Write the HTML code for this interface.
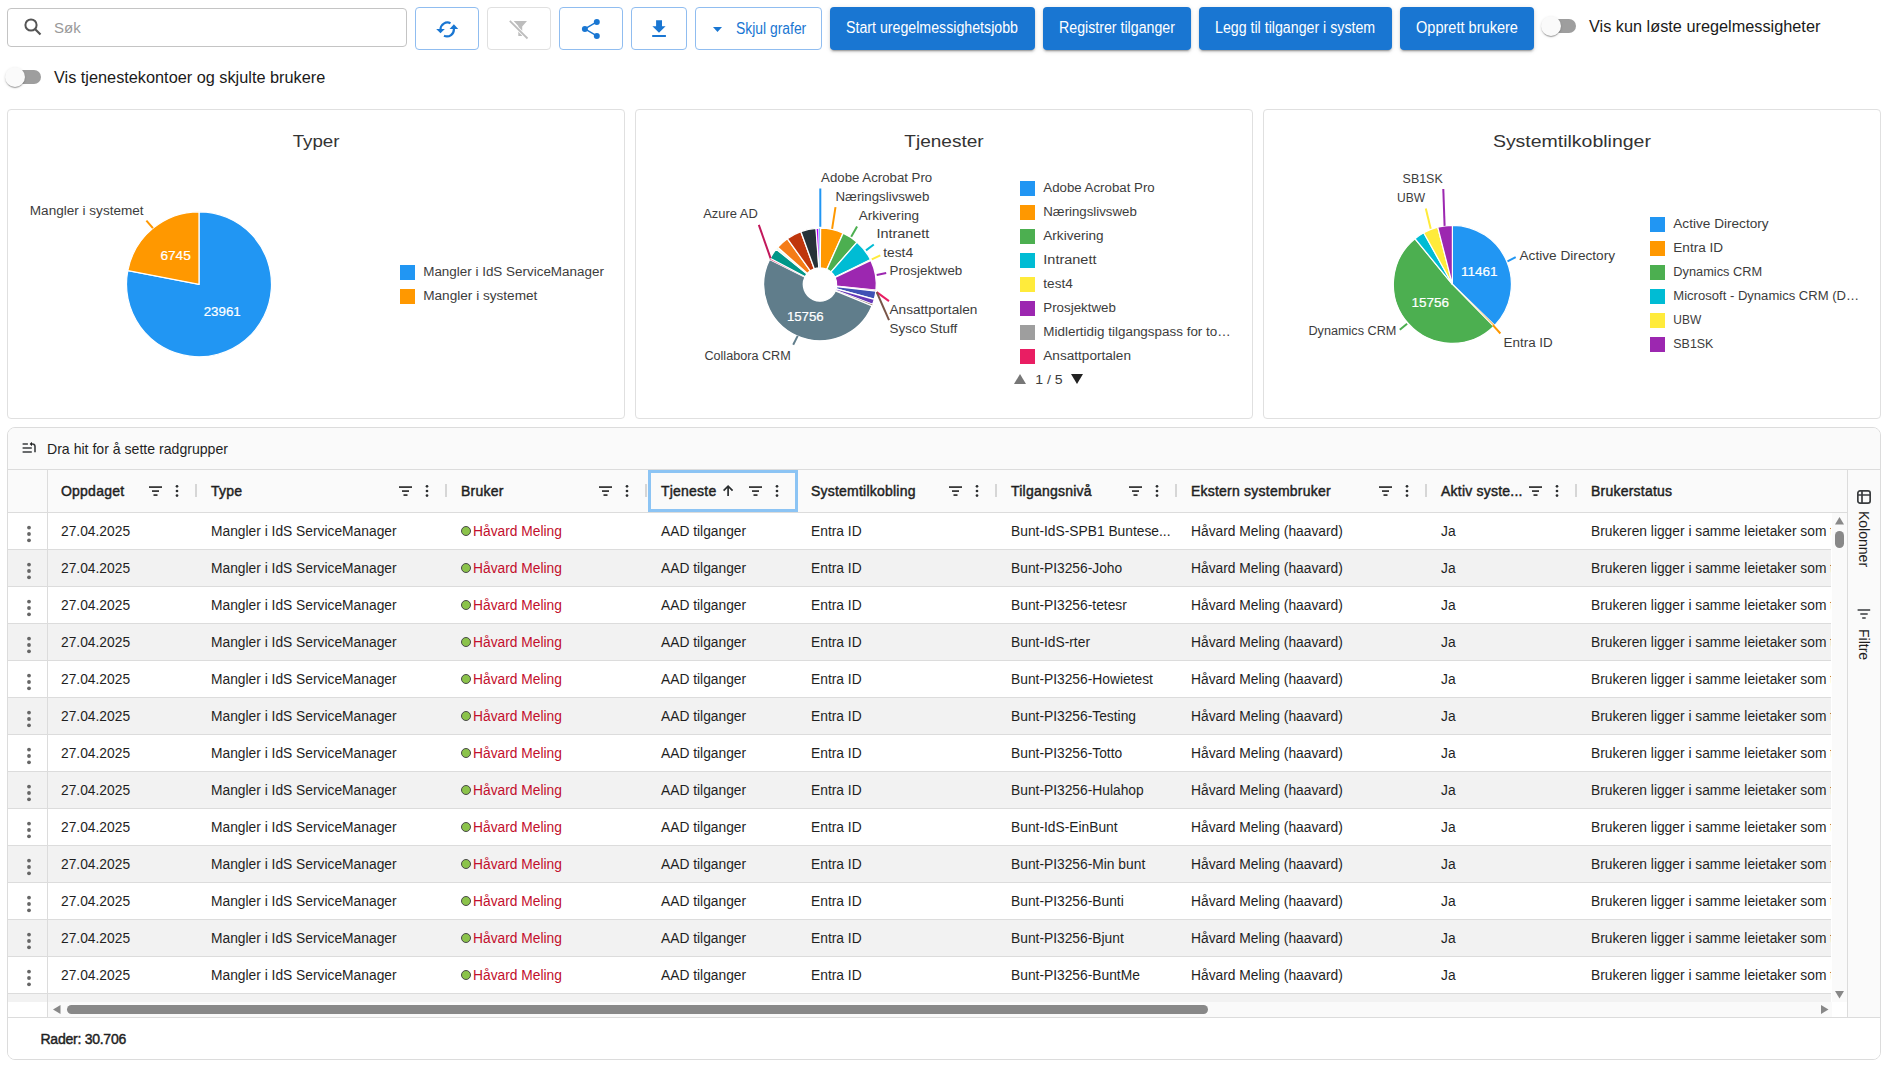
<!DOCTYPE html>
<html><head><meta charset="utf-8"><title>Uregelmessigheter</title>
<style>
*{box-sizing:border-box;margin:0;padding:0}
html,body{width:1888px;height:1068px;overflow:hidden;background:#fff;font-family:"Liberation Sans", sans-serif;color:#1f1f1f}
.abs{position:absolute}
.search{position:absolute;left:7px;top:8px;width:400px;height:39px;border:1px solid #c4c4c4;border-radius:4px}
.search .ph{position:absolute;left:46px;top:10px;font-size:15px;color:#999}
.ibtn{position:absolute;top:7px;height:43px;border:1px solid #90bdf0;border-radius:4px;background:#fff}
.ibtn.dis{border-color:#e0e0e0}
.obtn{position:absolute;top:7px;height:43px;border:1px solid #90bdf0;border-radius:4px;background:#fff;color:#1976d2;font-size:14.3px}
.cbtn{position:absolute;top:7px;height:43px;border-radius:4px;background:#1976d2;color:#fff;font-size:14.3px;
  box-shadow:0 3px 1px -2px rgba(0,0,0,.2),0 2px 2px 0 rgba(0,0,0,.14),0 1px 5px 0 rgba(0,0,0,.12);white-space:nowrap}
.cbtn span,.obtn span{position:absolute;top:12px;font-size:16px;transform-origin:0 0;white-space:nowrap}
.tog{position:absolute}
.tog .track{position:absolute;width:26px;height:14px;border-radius:7px;background:#9e9e9e}
.tog .thumb{position:absolute;width:20px;height:20px;border-radius:50%;background:#fafafa;
  box-shadow:0 2px 1px -1px rgba(0,0,0,.2),0 1px 1px 0 rgba(0,0,0,.14),0 1px 3px 0 rgba(0,0,0,.12)}
.lbl{position:absolute;font-size:16.3px;color:#1a1a1a;white-space:nowrap}
.card{position:absolute;top:109px;width:618px;height:310px;border:1px solid #e0e0e0;border-radius:4px;background:#fff}
.charts{position:absolute;left:0;top:0}
.grid{position:absolute;left:7px;top:427px;width:1874px;height:633px;border:1px solid #dcdcdc;border-radius:8px;background:#fff;overflow:hidden}
.gi{position:absolute;left:-8px;top:-428px;width:1888px;height:1068px}
.gpanel{position:absolute;left:8px;top:428px;width:1872px;height:42px;background:#fafafa;border-bottom:1px solid #dcdcdc}
.gpanel .t{position:absolute;left:39px;top:13px;font-size:14.1px;color:#1f1f1f}
.header{position:absolute;left:0;top:0;width:1847px;height:513px}
.hbg{position:absolute;left:8px;top:470px;width:1839px;height:43px;background:#fafafa;border-bottom:1px solid #dcdcdc}
.htxt{position:absolute;top:483px;font-size:14px;font-weight:normal;-webkit-text-stroke:0.45px #1f1f1f;letter-spacing:0.22px;color:#1f1f1f;white-space:nowrap}
.hfilt{position:absolute;top:486px;line-height:0}
.hdots{position:absolute;top:484px;line-height:0}
.hsep{position:absolute;top:484px;width:2px;height:13px;background:#d6d6d6}
.sortarrow{position:absolute}
.focus{position:absolute;left:648px;top:470px;width:150px;height:42px;border:3px solid #8cc4f4}
.pinline{position:absolute;left:47px;top:470px;width:1px;height:548px;background:#dcdcdc;z-index:2}
.rows{position:absolute;left:0;top:513px;width:1831px;height:489px;overflow:hidden}
.row{position:absolute;left:8px;width:1824px;height:37px;border-bottom:1px solid #dcdcdc}
.rdots{position:absolute;left:18px;top:12px;line-height:0}
.c{position:absolute;top:11px;font-size:13.8px;color:#1f1f1f;white-space:nowrap}
.red{color:#c20f2c}
.gdot{display:inline-block;width:10px;height:10px;border-radius:50%;background:#8bc34a;border:1px solid #4a4a4a;margin-right:2px;vertical-align:-0px}
.vscroll{position:absolute;left:1832px;top:513px;width:15px;height:489px;background:#fafafa}
.hscroll{position:absolute;left:8px;top:1002px;width:1824px;height:15px;background:#fafafa}
.sidebar{position:absolute;left:1847px;top:470px;width:34px;height:548px;background:#fafafa;border-left:1px solid #dcdcdc}
.footer{position:absolute;left:8px;top:1017px;width:1872px;height:42px;border-top:1px solid #dcdcdc;background:#fff}
.footer .t{position:absolute;left:32.5px;top:12.5px;font-size:14px;letter-spacing:-0.25px;-webkit-text-stroke:0.45px #1f1f1f;color:#1f1f1f;white-space:nowrap}
.vtext{position:absolute;font-size:14px;color:#1f1f1f;transform:rotate(90deg);transform-origin:0 0;white-space:nowrap}
</style></head><body>
<div class="search">
 <svg class="abs" style="left:16px;top:9px" width="18" height="18" viewBox="0 0 18 18"><circle cx="7" cy="7" r="5.6" stroke="#555" stroke-width="2" fill="none"/><path d="M11,11 L16.5,16.5" stroke="#555" stroke-width="2.2"/></svg>
 <div class="ph">Søk</div>
</div>
<div class="ibtn" style="left:415px;width:64px">
 <svg class="abs" style="left:20px;top:13px" width="23" height="17" viewBox="0 0 23 17">
  <path d="M14.5,2.2 A7,7 0 0 0 4.5,8.5" stroke="#1976d2" stroke-width="2.2" fill="none"/>
  <path d="M0.2,7.9 L8.8,7.9 L4.5,12.3 Z" fill="#1976d2"/>
  <path d="M8,14.8 A7,7 0 0 0 17.8,7.5" stroke="#1976d2" stroke-width="2.2" fill="none"/>
  <path d="M13.6,8 L22.2,8 L17.9,3.2 Z" fill="#1976d2"/>
 </svg>
</div>
<div class="ibtn dis" style="left:487px;width:64px">
 <svg class="abs" style="left:20px;top:11px" width="21" height="21" viewBox="0 0 21 21">
  <path d="M5.7,2 L19,2 L14.2,7.6 L14.2,17 L10.3,17 L10.3,7 Z" fill="#bdbdbd"/>
  <path d="M1.5,1.5 L19.5,19.5" stroke="#fff" stroke-width="3.5"/>
  <path d="M1.8,1.8 L19.5,19.5" stroke="#bdbdbd" stroke-width="1.8"/>
 </svg>
</div>
<div class="ibtn" style="left:559px;width:64px">
 <svg class="abs" style="left:20px;top:12px;overflow:visible" width="20" height="18" viewBox="0 0 20 18">
  <path d="M4.9,8.9 L16.8,1.9 M4.9,8.9 L16.8,15.9" stroke="#1976d2" stroke-width="1.5"/>
  <circle cx="16.8" cy="1.9" r="3" fill="#1976d2"/><circle cx="4.9" cy="8.9" r="3" fill="#1976d2"/><circle cx="16.8" cy="15.9" r="3" fill="#1976d2"/>
 </svg>
</div>
<div class="ibtn" style="left:631px;width:56px">
 <svg class="abs" style="left:19px;top:12px" width="15" height="19" viewBox="0 0 15 19">
  <path d="M5.1,0.3 L11,0.3 L11,6.3 L14.6,6.3 L8,12.7 L1.4,6.3 L5.1,6.3 Z" fill="#1976d2"/>
  <rect x="1.2" y="15" width="13.7" height="2" fill="#1976d2"/>
 </svg>
</div>
<div class="obtn" style="left:695px;width:127px">
 <svg class="abs" style="left:17px;top:19px" width="9" height="5" viewBox="0 0 9 5"><path d="M0,0 L9,0 L4.5,5 Z" fill="#1976d2"/></svg>
 <span style="left:40px;transform:scaleX(0.868)">Skjul grafer</span>
</div>
<div class="cbtn" style="left:830px;width:205px"><span style="left:16px;transform:scaleX(0.887)">Start uregelmessighetsjobb</span></div>
<div class="cbtn" style="left:1043px;width:148px"><span style="left:16px;transform:scaleX(0.887)">Registrer tilganger</span></div>
<div class="cbtn" style="left:1199px;width:193px"><span style="left:16px;transform:scaleX(0.887)">Legg til tilganger i system</span></div>
<div class="cbtn" style="left:1400px;width:134px"><span style="left:16px;transform:scaleX(0.91)">Opprett brukere</span></div>
<div class="tog" style="left:1541px;top:16px"><div class="track" style="left:9px;top:3px"></div><div class="thumb" style="left:0;top:0"></div></div>
<div class="lbl" style="left:1589px;top:17px">Vis kun løste uregelmessigheter</div>
<div class="tog" style="left:5px;top:67px"><div class="track" style="left:10px;top:3px"></div><div class="thumb" style="left:0;top:0"></div></div>
<div class="lbl" style="left:54px;top:68px">Vis tjenestekontoer og skjulte brukere</div>

<div class="card" style="left:7px"></div>
<div class="card" style="left:635px"></div>
<div class="card" style="left:1263px"></div>
<svg class="charts" width="1888" height="430" viewBox="0 0 1888 430" font-family='"Liberation Sans", sans-serif'><text x="292.7" y="146.9" font-size="17" fill="#333" text-anchor="start" textLength="46.8" lengthAdjust="spacingAndGlyphs" >Typer</text>
<path d="M199.00,284.30 L199.00,211.80 A72.5,72.5 0 1 1 127.81,270.59 Z" fill="#2196f3" stroke="#fff" stroke-width="1.2"/>
<path d="M199.00,284.30 L127.81,270.59 A72.5,72.5 0 0 1 199.00,211.80 Z" fill="#ff9800" stroke="#fff" stroke-width="1.2"/>
<text x="160.4" y="260.0" font-size="12.5" fill="#fff" text-anchor="start" textLength="30.4" lengthAdjust="spacingAndGlyphs" stroke="#fff" stroke-width="0.2">6745</text>
<text x="203.7" y="315.9" font-size="12.5" fill="#fff" text-anchor="start" textLength="37.0" lengthAdjust="spacingAndGlyphs" stroke="#fff" stroke-width="0.2">23961</text>
<line x1="146.4" y1="220.6" x2="152.9" y2="228.1" stroke="#ff9800" stroke-width="2"/>
<text x="29.8" y="214.8" font-size="12.5" fill="#3c3c3c" text-anchor="start" textLength="113.8" lengthAdjust="spacingAndGlyphs" >Mangler i systemet</text>
<rect x="400" y="265" width="15" height="15" fill="#2196f3"/>
<rect x="400" y="289" width="15" height="15" fill="#ff9800"/>
<text x="423.2" y="275.8" font-size="12.5" fill="#3c3c3c" text-anchor="start" textLength="180.7" lengthAdjust="spacingAndGlyphs" >Mangler i IdS ServiceManager</text>
<text x="423.2" y="299.8" font-size="12.5" fill="#3c3c3c" text-anchor="start" textLength="114.2" lengthAdjust="spacingAndGlyphs" >Mangler i systemet</text>
<text x="904.3" y="147.4" font-size="17" fill="#333" text-anchor="start" textLength="79.4" lengthAdjust="spacingAndGlyphs" >Tjenester</text>
<path d="M820.00,228.20 A56.3,56.3 0 0 1 820.59,228.20 L820.17,267.80 A16.7,16.7 0 0 0 820.00,267.80 Z" fill="#2196f3" stroke="#fff" stroke-width="0.5"/>
<path d="M820.59,228.20 A56.3,56.3 0 0 1 843.08,233.15 L826.85,269.27 A16.7,16.7 0 0 0 820.17,267.80 Z" fill="#ff9800" stroke="#fff" stroke-width="1.3"/>
<path d="M843.08,233.15 A56.3,56.3 0 0 1 857.08,242.14 L831.00,271.93 A16.7,16.7 0 0 0 826.85,269.27 Z" fill="#4caf50" stroke="#fff" stroke-width="1.3"/>
<path d="M857.08,242.14 A56.3,56.3 0 0 1 870.52,259.64 L834.98,277.13 A16.7,16.7 0 0 0 831.00,271.93 Z" fill="#00bcd4" stroke="#fff" stroke-width="1.3"/>
<path d="M870.52,259.64 A56.3,56.3 0 0 1 870.86,260.35 L835.09,277.34 A16.7,16.7 0 0 0 834.98,277.13 Z" fill="#ffeb3b" stroke="#fff" stroke-width="0.5"/>
<path d="M870.86,260.35 A56.3,56.3 0 0 1 876.01,290.19 L836.61,286.19 A16.7,16.7 0 0 0 835.09,277.34 Z" fill="#9c27b0" stroke="#fff" stroke-width="1.3"/>
<path d="M876.01,290.19 A56.3,56.3 0 0 1 875.90,291.17 L836.58,286.48 A16.7,16.7 0 0 0 836.61,286.19 Z" fill="#e91e63" stroke="#fff" stroke-width="0.5"/>
<path d="M875.90,291.17 A56.3,56.3 0 0 1 874.33,299.26 L836.12,288.88 A16.7,16.7 0 0 0 836.58,286.48 Z" fill="#3f51b5" stroke="#fff" stroke-width="1.3"/>
<path d="M874.33,299.26 A56.3,56.3 0 0 1 872.67,304.40 L835.62,290.40 A16.7,16.7 0 0 0 836.12,288.88 Z" fill="#673ab7" stroke="#fff" stroke-width="1.3"/>
<path d="M872.67,304.40 A56.3,56.3 0 0 1 872.09,305.86 L835.45,290.84 A16.7,16.7 0 0 0 835.62,290.40 Z" fill="#795548" stroke="#fff" stroke-width="0.5"/>
<path d="M872.09,305.86 A56.3,56.3 0 1 1 769.57,259.47 L805.04,277.07 A16.7,16.7 0 1 0 835.45,290.84 Z" fill="#607d8b" stroke="#fff" stroke-width="1.3"/>
<path d="M769.57,259.47 A56.3,56.3 0 0 1 770.20,258.24 L805.23,276.71 A16.7,16.7 0 0 0 805.04,277.07 Z" fill="#e91e63" stroke="#fff" stroke-width="0.5"/>
<path d="M770.20,258.24 A56.3,56.3 0 0 1 776.18,249.15 L807.00,274.01 A16.7,16.7 0 0 0 805.23,276.71 Z" fill="#009688" stroke="#fff" stroke-width="1.3"/>
<path d="M776.18,249.15 A56.3,56.3 0 0 1 777.70,247.34 L807.45,273.48 A16.7,16.7 0 0 0 807.00,274.01 Z" fill="#f1f8e9" stroke="#fff" stroke-width="0.5"/>
<path d="M777.70,247.34 A56.3,56.3 0 0 1 787.31,238.67 L810.30,270.90 A16.7,16.7 0 0 0 807.45,273.48 Z" fill="#f57c17" stroke="#fff" stroke-width="1.3"/>
<path d="M787.31,238.67 A56.3,56.3 0 0 1 800.84,231.56 L814.32,268.80 A16.7,16.7 0 0 0 810.30,270.90 Z" fill="#bf360c" stroke="#fff" stroke-width="1.3"/>
<path d="M800.84,231.56 A56.3,56.3 0 0 1 816.37,228.32 L818.92,267.83 A16.7,16.7 0 0 0 814.32,268.80 Z" fill="#263238" stroke="#fff" stroke-width="1.3"/>
<path d="M815.97,228.34 A56.3,56.3 0 0 1 818.92,228.21 L819.68,267.80 A16.7,16.7 0 0 0 818.81,267.84 Z" fill="#aa00ff" stroke="#fff" stroke-width="1.3"/>
<path d="M818.92,228.21 A56.3,56.3 0 0 1 820.00,228.20 L820.00,267.80 A16.7,16.7 0 0 0 819.68,267.80 Z" fill="#2196f3" stroke="#fff" stroke-width="0.5"/>
<text x="786.9" y="320.6" font-size="12.5" fill="#fff" text-anchor="start" textLength="36.8" lengthAdjust="spacingAndGlyphs" stroke="#fff" stroke-width="0.2">15756</text>
<line x1="820.3" y1="188.5" x2="820.3" y2="226.8" stroke="#2196f3" stroke-width="2"/>
<line x1="835.5" y1="207.2" x2="832.1" y2="228.8" stroke="#ff9800" stroke-width="2"/>
<line x1="857.1" y1="226.4" x2="851.2" y2="236.7" stroke="#4caf50" stroke-width="2"/>
<line x1="873.8" y1="244.5" x2="866" y2="250.4" stroke="#00bcd4" stroke-width="2"/>
<line x1="880.3" y1="255.3" x2="871.8" y2="259.3" stroke="#ffeb3b" stroke-width="2"/>
<line x1="886.2" y1="273" x2="876.7" y2="275" stroke="#9c27b0" stroke-width="2"/>
<line x1="889" y1="301.1" x2="876.7" y2="292.1" stroke="#e91e63" stroke-width="2"/>
<line x1="889" y1="320.2" x2="876.7" y2="292.1" stroke="#795548" stroke-width="2"/>
<line x1="793.2" y1="344.8" x2="797.7" y2="335.9" stroke="#607d8b" stroke-width="2"/>
<line x1="758.8" y1="224.9" x2="770.6" y2="258.3" stroke="#c2185b" stroke-width="2"/>
<text x="821.1" y="181.6" font-size="12.5" fill="#3c3c3c" text-anchor="start" textLength="111.1" lengthAdjust="spacingAndGlyphs" >Adobe Acrobat Pro</text>
<text x="835.5" y="200.9" font-size="12.5" fill="#3c3c3c" text-anchor="start" textLength="93.9" lengthAdjust="spacingAndGlyphs" >Næringslivsweb</text>
<text x="858.7" y="219.6" font-size="12.5" fill="#3c3c3c" text-anchor="start" textLength="60.3" lengthAdjust="spacingAndGlyphs" >Arkivering</text>
<text x="876.4" y="237.6" font-size="12.5" fill="#3c3c3c" text-anchor="start" textLength="53.0" lengthAdjust="spacingAndGlyphs" >Intranett</text>
<text x="883.2" y="256.7" font-size="12.5" fill="#3c3c3c" text-anchor="start" textLength="29.9" lengthAdjust="spacingAndGlyphs" >test4</text>
<text x="889.5" y="275.0" font-size="12.5" fill="#3c3c3c" text-anchor="start" textLength="72.8" lengthAdjust="spacingAndGlyphs" >Prosjektweb</text>
<text x="889.5" y="314.3" font-size="12.5" fill="#3c3c3c" text-anchor="start" textLength="87.9" lengthAdjust="spacingAndGlyphs" >Ansattportalen</text>
<text x="889.5" y="333.4" font-size="12.5" fill="#3c3c3c" text-anchor="start" textLength="67.8" lengthAdjust="spacingAndGlyphs" >Sysco Stuff</text>
<text x="704.4" y="359.5" font-size="12.5" fill="#3c3c3c" text-anchor="start" textLength="86.3" lengthAdjust="spacingAndGlyphs" >Collabora CRM</text>
<text x="703.2" y="217.6" font-size="12.5" fill="#3c3c3c" text-anchor="start" textLength="54.6" lengthAdjust="spacingAndGlyphs" >Azure AD</text>
<rect x="1020" y="181" width="15" height="15" fill="#2196f3"/>
<text x="1043.3" y="191.5" font-size="12.5" fill="#3c3c3c" text-anchor="start" textLength="111.4" lengthAdjust="spacingAndGlyphs" >Adobe Acrobat Pro</text>
<rect x="1020" y="205" width="15" height="15" fill="#ff9800"/>
<text x="1043.3" y="215.5" font-size="12.5" fill="#3c3c3c" text-anchor="start" textLength="93.5" lengthAdjust="spacingAndGlyphs" >Næringslivsweb</text>
<rect x="1020" y="229" width="15" height="15" fill="#4caf50"/>
<text x="1043.3" y="239.5" font-size="12.5" fill="#3c3c3c" text-anchor="start" textLength="60.3" lengthAdjust="spacingAndGlyphs" >Arkivering</text>
<rect x="1020" y="253" width="15" height="15" fill="#00bcd4"/>
<text x="1043.3" y="263.5" font-size="12.5" fill="#3c3c3c" text-anchor="start" textLength="53.2" lengthAdjust="spacingAndGlyphs" >Intranett</text>
<rect x="1020" y="277" width="15" height="15" fill="#ffeb3b"/>
<text x="1043.3" y="287.5" font-size="12.5" fill="#3c3c3c" text-anchor="start" textLength="29.5" lengthAdjust="spacingAndGlyphs" >test4</text>
<rect x="1020" y="301" width="15" height="15" fill="#9c27b0"/>
<text x="1043.3" y="311.5" font-size="12.5" fill="#3c3c3c" text-anchor="start" textLength="72.6" lengthAdjust="spacingAndGlyphs" >Prosjektweb</text>
<rect x="1020" y="325" width="15" height="15" fill="#9e9e9e"/>
<text x="1043.3" y="335.5" font-size="12.5" fill="#3c3c3c" text-anchor="start" textLength="187.4" lengthAdjust="spacingAndGlyphs" >Midlertidig tilgangspass for to…</text>
<rect x="1020" y="349" width="15" height="15" fill="#e91e63"/>
<text x="1043.3" y="359.5" font-size="12.5" fill="#3c3c3c" text-anchor="start" textLength="87.7" lengthAdjust="spacingAndGlyphs" >Ansattportalen</text>
<path d="M1014,384 L1020,374 L1026,384 Z" fill="#777"/>
<text x="1035.2" y="383.5" font-size="12.5" fill="#3c3c3c" text-anchor="start" textLength="27.5" lengthAdjust="spacingAndGlyphs" >1 / 5</text>
<path d="M1071,374 L1083,374 L1077,384 Z" fill="#222"/>
<text x="1492.9" y="147.4" font-size="17" fill="#333" text-anchor="start" textLength="158.0" lengthAdjust="spacingAndGlyphs" >Systemtilkoblinger</text>
<path d="M1452.40,284.30 L1452.40,225.30 A59,59 0 0 1 1494.77,325.36 Z" fill="#2196f3" stroke="#fff" stroke-width="1.2"/>
<path d="M1452.40,284.30 L1494.77,325.36 A59,59 0 0 1 1493.61,326.53 Z" fill="#ff9800" stroke="#fff" stroke-width="0.5"/>
<path d="M1452.40,284.30 L1493.68,326.45 A59,59 0 1 1 1414.95,238.71 Z" fill="#4caf50" stroke="#fff" stroke-width="1.2"/>
<path d="M1452.40,284.30 L1414.95,238.71 A59,59 0 0 1 1423.71,232.75 Z" fill="#00bcd4" stroke="#fff" stroke-width="1.2"/>
<path d="M1452.40,284.30 L1423.71,232.75 A59,59 0 0 1 1437.73,227.15 Z" fill="#ffeb3b" stroke="#fff" stroke-width="1.2"/>
<path d="M1452.40,284.30 L1437.73,227.15 A59,59 0 0 1 1452.40,225.30 Z" fill="#9c27b0" stroke="#fff" stroke-width="1.2"/>
<text x="1461.0" y="275.5" font-size="12.5" fill="#fff" text-anchor="start" textLength="36.6" lengthAdjust="spacingAndGlyphs" stroke="#fff" stroke-width="0.2">11461</text>
<text x="1411.4" y="306.8" font-size="12.5" fill="#fff" text-anchor="start" textLength="37.5" lengthAdjust="spacingAndGlyphs" stroke="#fff" stroke-width="0.2">15756</text>
<line x1="1443.3" y1="189" x2="1444.6" y2="225.9" stroke="#9c27b0" stroke-width="2"/>
<line x1="1425.8" y1="208.4" x2="1430.7" y2="228.7" stroke="#ffeb3b" stroke-width="2"/>
<line x1="1515.7" y1="257.1" x2="1507.5" y2="261.4" stroke="#2196f3" stroke-width="2"/>
<line x1="1399.8" y1="329.8" x2="1407.1" y2="323.8" stroke="#4caf50" stroke-width="2"/>
<line x1="1500.4" y1="333.5" x2="1492.9" y2="325.1" stroke="#ff9800" stroke-width="2"/>
<text x="1402.6" y="182.8" font-size="12.5" fill="#3c3c3c" text-anchor="start" textLength="40.1" lengthAdjust="spacingAndGlyphs" >SB1SK</text>
<text x="1397.0" y="201.5" font-size="12.5" fill="#3c3c3c" text-anchor="start" textLength="28.1" lengthAdjust="spacingAndGlyphs" >UBW</text>
<text x="1519.5" y="259.6" font-size="12.5" fill="#3c3c3c" text-anchor="start" textLength="95.6" lengthAdjust="spacingAndGlyphs" >Active Directory</text>
<text x="1308.4" y="334.5" font-size="12.5" fill="#3c3c3c" text-anchor="start" textLength="88.0" lengthAdjust="spacingAndGlyphs" >Dynamics CRM</text>
<text x="1503.6" y="347.0" font-size="12.5" fill="#3c3c3c" text-anchor="start" textLength="49.2" lengthAdjust="spacingAndGlyphs" >Entra ID</text>
<rect x="1650" y="217" width="15" height="15" fill="#2196f3"/>
<text x="1673.3" y="227.8" font-size="12.5" fill="#3c3c3c" text-anchor="start" textLength="95.3" lengthAdjust="spacingAndGlyphs" >Active Directory</text>
<rect x="1650" y="241" width="15" height="15" fill="#ff9800"/>
<text x="1673.3" y="251.8" font-size="12.5" fill="#3c3c3c" text-anchor="start" textLength="49.9" lengthAdjust="spacingAndGlyphs" >Entra ID</text>
<rect x="1650" y="265" width="15" height="15" fill="#4caf50"/>
<text x="1673.3" y="275.8" font-size="12.5" fill="#3c3c3c" text-anchor="start" textLength="88.8" lengthAdjust="spacingAndGlyphs" >Dynamics CRM</text>
<rect x="1650" y="289" width="15" height="15" fill="#00bcd4"/>
<text x="1673.3" y="299.8" font-size="12.5" fill="#3c3c3c" text-anchor="start" textLength="185.8" lengthAdjust="spacingAndGlyphs" >Microsoft - Dynamics CRM (D…</text>
<rect x="1650" y="313" width="15" height="15" fill="#ffeb3b"/>
<text x="1673.3" y="323.8" font-size="12.5" fill="#3c3c3c" text-anchor="start" textLength="27.9" lengthAdjust="spacingAndGlyphs" >UBW</text>
<rect x="1650" y="337" width="15" height="15" fill="#9c27b0"/>
<text x="1673.3" y="347.8" font-size="12.5" fill="#3c3c3c" text-anchor="start" textLength="40.1" lengthAdjust="spacingAndGlyphs" >SB1SK</text></svg>

<div class="grid"><div class="gi">
 <div class="gpanel">
  <svg class="abs" style="left:14px;top:14px" width="16" height="14" viewBox="0 0 16 14"><path d="M0.6,2 H5.9 M0.6,6 H9.8 M0.6,10 H9.8" stroke="#3a3d3f" stroke-width="1.6"/><path d="M13,10.2 V4.6 Q13,2 10.4,2 H9.3" stroke="#3a3d3f" stroke-width="1.6" fill="none"/><path d="M7.6,2 L10,-0.2 L10,4.2 Z" fill="#222"/></svg>
  <div class="t">Dra hit for å sette radgrupper</div>
 </div>
 <div class="rows">
 <div class="row" style="top:0px;background:#fff"><div class="rdots"><svg width="6" height="18" viewBox="0 0 6 18"><circle cx="3" cy="2.6" r="1.9" fill="#666"/><circle cx="3" cy="9" r="1.9" fill="#666"/><circle cx="3" cy="15.3" r="1.9" fill="#666"/></svg></div><div class="c" style="left:53px">27.04.2025</div><div class="c" style="left:203px">Mangler i IdS ServiceManager</div><div class="c" style="left:453px"><span class="gdot"></span><span class="red">Håvard Meling</span></div><div class="c" style="left:653px">AAD tilganger</div><div class="c" style="left:803px">Entra ID</div><div class="c" style="left:1003px">Bunt-IdS-SPB1 Buntese...</div><div class="c" style="left:1183px">Håvard Meling (haavard)</div><div class="c" style="left:1433px">Ja</div><div class="c" style="left:1583px">Brukeren ligger i samme leietaker som tjenesten</div></div><div class="row" style="top:37px;background:#f2f2f2"><div class="rdots"><svg width="6" height="18" viewBox="0 0 6 18"><circle cx="3" cy="2.6" r="1.9" fill="#666"/><circle cx="3" cy="9" r="1.9" fill="#666"/><circle cx="3" cy="15.3" r="1.9" fill="#666"/></svg></div><div class="c" style="left:53px">27.04.2025</div><div class="c" style="left:203px">Mangler i IdS ServiceManager</div><div class="c" style="left:453px"><span class="gdot"></span><span class="red">Håvard Meling</span></div><div class="c" style="left:653px">AAD tilganger</div><div class="c" style="left:803px">Entra ID</div><div class="c" style="left:1003px">Bunt-PI3256-Joho</div><div class="c" style="left:1183px">Håvard Meling (haavard)</div><div class="c" style="left:1433px">Ja</div><div class="c" style="left:1583px">Brukeren ligger i samme leietaker som tjenesten</div></div><div class="row" style="top:74px;background:#fff"><div class="rdots"><svg width="6" height="18" viewBox="0 0 6 18"><circle cx="3" cy="2.6" r="1.9" fill="#666"/><circle cx="3" cy="9" r="1.9" fill="#666"/><circle cx="3" cy="15.3" r="1.9" fill="#666"/></svg></div><div class="c" style="left:53px">27.04.2025</div><div class="c" style="left:203px">Mangler i IdS ServiceManager</div><div class="c" style="left:453px"><span class="gdot"></span><span class="red">Håvard Meling</span></div><div class="c" style="left:653px">AAD tilganger</div><div class="c" style="left:803px">Entra ID</div><div class="c" style="left:1003px">Bunt-PI3256-tetesr</div><div class="c" style="left:1183px">Håvard Meling (haavard)</div><div class="c" style="left:1433px">Ja</div><div class="c" style="left:1583px">Brukeren ligger i samme leietaker som tjenesten</div></div><div class="row" style="top:111px;background:#f2f2f2"><div class="rdots"><svg width="6" height="18" viewBox="0 0 6 18"><circle cx="3" cy="2.6" r="1.9" fill="#666"/><circle cx="3" cy="9" r="1.9" fill="#666"/><circle cx="3" cy="15.3" r="1.9" fill="#666"/></svg></div><div class="c" style="left:53px">27.04.2025</div><div class="c" style="left:203px">Mangler i IdS ServiceManager</div><div class="c" style="left:453px"><span class="gdot"></span><span class="red">Håvard Meling</span></div><div class="c" style="left:653px">AAD tilganger</div><div class="c" style="left:803px">Entra ID</div><div class="c" style="left:1003px">Bunt-IdS-rter</div><div class="c" style="left:1183px">Håvard Meling (haavard)</div><div class="c" style="left:1433px">Ja</div><div class="c" style="left:1583px">Brukeren ligger i samme leietaker som tjenesten</div></div><div class="row" style="top:148px;background:#fff"><div class="rdots"><svg width="6" height="18" viewBox="0 0 6 18"><circle cx="3" cy="2.6" r="1.9" fill="#666"/><circle cx="3" cy="9" r="1.9" fill="#666"/><circle cx="3" cy="15.3" r="1.9" fill="#666"/></svg></div><div class="c" style="left:53px">27.04.2025</div><div class="c" style="left:203px">Mangler i IdS ServiceManager</div><div class="c" style="left:453px"><span class="gdot"></span><span class="red">Håvard Meling</span></div><div class="c" style="left:653px">AAD tilganger</div><div class="c" style="left:803px">Entra ID</div><div class="c" style="left:1003px">Bunt-PI3256-Howietest</div><div class="c" style="left:1183px">Håvard Meling (haavard)</div><div class="c" style="left:1433px">Ja</div><div class="c" style="left:1583px">Brukeren ligger i samme leietaker som tjenesten</div></div><div class="row" style="top:185px;background:#f2f2f2"><div class="rdots"><svg width="6" height="18" viewBox="0 0 6 18"><circle cx="3" cy="2.6" r="1.9" fill="#666"/><circle cx="3" cy="9" r="1.9" fill="#666"/><circle cx="3" cy="15.3" r="1.9" fill="#666"/></svg></div><div class="c" style="left:53px">27.04.2025</div><div class="c" style="left:203px">Mangler i IdS ServiceManager</div><div class="c" style="left:453px"><span class="gdot"></span><span class="red">Håvard Meling</span></div><div class="c" style="left:653px">AAD tilganger</div><div class="c" style="left:803px">Entra ID</div><div class="c" style="left:1003px">Bunt-PI3256-Testing</div><div class="c" style="left:1183px">Håvard Meling (haavard)</div><div class="c" style="left:1433px">Ja</div><div class="c" style="left:1583px">Brukeren ligger i samme leietaker som tjenesten</div></div><div class="row" style="top:222px;background:#fff"><div class="rdots"><svg width="6" height="18" viewBox="0 0 6 18"><circle cx="3" cy="2.6" r="1.9" fill="#666"/><circle cx="3" cy="9" r="1.9" fill="#666"/><circle cx="3" cy="15.3" r="1.9" fill="#666"/></svg></div><div class="c" style="left:53px">27.04.2025</div><div class="c" style="left:203px">Mangler i IdS ServiceManager</div><div class="c" style="left:453px"><span class="gdot"></span><span class="red">Håvard Meling</span></div><div class="c" style="left:653px">AAD tilganger</div><div class="c" style="left:803px">Entra ID</div><div class="c" style="left:1003px">Bunt-PI3256-Totto</div><div class="c" style="left:1183px">Håvard Meling (haavard)</div><div class="c" style="left:1433px">Ja</div><div class="c" style="left:1583px">Brukeren ligger i samme leietaker som tjenesten</div></div><div class="row" style="top:259px;background:#f2f2f2"><div class="rdots"><svg width="6" height="18" viewBox="0 0 6 18"><circle cx="3" cy="2.6" r="1.9" fill="#666"/><circle cx="3" cy="9" r="1.9" fill="#666"/><circle cx="3" cy="15.3" r="1.9" fill="#666"/></svg></div><div class="c" style="left:53px">27.04.2025</div><div class="c" style="left:203px">Mangler i IdS ServiceManager</div><div class="c" style="left:453px"><span class="gdot"></span><span class="red">Håvard Meling</span></div><div class="c" style="left:653px">AAD tilganger</div><div class="c" style="left:803px">Entra ID</div><div class="c" style="left:1003px">Bunt-PI3256-Hulahop</div><div class="c" style="left:1183px">Håvard Meling (haavard)</div><div class="c" style="left:1433px">Ja</div><div class="c" style="left:1583px">Brukeren ligger i samme leietaker som tjenesten</div></div><div class="row" style="top:296px;background:#fff"><div class="rdots"><svg width="6" height="18" viewBox="0 0 6 18"><circle cx="3" cy="2.6" r="1.9" fill="#666"/><circle cx="3" cy="9" r="1.9" fill="#666"/><circle cx="3" cy="15.3" r="1.9" fill="#666"/></svg></div><div class="c" style="left:53px">27.04.2025</div><div class="c" style="left:203px">Mangler i IdS ServiceManager</div><div class="c" style="left:453px"><span class="gdot"></span><span class="red">Håvard Meling</span></div><div class="c" style="left:653px">AAD tilganger</div><div class="c" style="left:803px">Entra ID</div><div class="c" style="left:1003px">Bunt-IdS-EinBunt</div><div class="c" style="left:1183px">Håvard Meling (haavard)</div><div class="c" style="left:1433px">Ja</div><div class="c" style="left:1583px">Brukeren ligger i samme leietaker som tjenesten</div></div><div class="row" style="top:333px;background:#f2f2f2"><div class="rdots"><svg width="6" height="18" viewBox="0 0 6 18"><circle cx="3" cy="2.6" r="1.9" fill="#666"/><circle cx="3" cy="9" r="1.9" fill="#666"/><circle cx="3" cy="15.3" r="1.9" fill="#666"/></svg></div><div class="c" style="left:53px">27.04.2025</div><div class="c" style="left:203px">Mangler i IdS ServiceManager</div><div class="c" style="left:453px"><span class="gdot"></span><span class="red">Håvard Meling</span></div><div class="c" style="left:653px">AAD tilganger</div><div class="c" style="left:803px">Entra ID</div><div class="c" style="left:1003px">Bunt-PI3256-Min bunt</div><div class="c" style="left:1183px">Håvard Meling (haavard)</div><div class="c" style="left:1433px">Ja</div><div class="c" style="left:1583px">Brukeren ligger i samme leietaker som tjenesten</div></div><div class="row" style="top:370px;background:#fff"><div class="rdots"><svg width="6" height="18" viewBox="0 0 6 18"><circle cx="3" cy="2.6" r="1.9" fill="#666"/><circle cx="3" cy="9" r="1.9" fill="#666"/><circle cx="3" cy="15.3" r="1.9" fill="#666"/></svg></div><div class="c" style="left:53px">27.04.2025</div><div class="c" style="left:203px">Mangler i IdS ServiceManager</div><div class="c" style="left:453px"><span class="gdot"></span><span class="red">Håvard Meling</span></div><div class="c" style="left:653px">AAD tilganger</div><div class="c" style="left:803px">Entra ID</div><div class="c" style="left:1003px">Bunt-PI3256-Bunti</div><div class="c" style="left:1183px">Håvard Meling (haavard)</div><div class="c" style="left:1433px">Ja</div><div class="c" style="left:1583px">Brukeren ligger i samme leietaker som tjenesten</div></div><div class="row" style="top:407px;background:#f2f2f2"><div class="rdots"><svg width="6" height="18" viewBox="0 0 6 18"><circle cx="3" cy="2.6" r="1.9" fill="#666"/><circle cx="3" cy="9" r="1.9" fill="#666"/><circle cx="3" cy="15.3" r="1.9" fill="#666"/></svg></div><div class="c" style="left:53px">27.04.2025</div><div class="c" style="left:203px">Mangler i IdS ServiceManager</div><div class="c" style="left:453px"><span class="gdot"></span><span class="red">Håvard Meling</span></div><div class="c" style="left:653px">AAD tilganger</div><div class="c" style="left:803px">Entra ID</div><div class="c" style="left:1003px">Bunt-PI3256-Bjunt</div><div class="c" style="left:1183px">Håvard Meling (haavard)</div><div class="c" style="left:1433px">Ja</div><div class="c" style="left:1583px">Brukeren ligger i samme leietaker som tjenesten</div></div><div class="row" style="top:444px;background:#fff"><div class="rdots"><svg width="6" height="18" viewBox="0 0 6 18"><circle cx="3" cy="2.6" r="1.9" fill="#666"/><circle cx="3" cy="9" r="1.9" fill="#666"/><circle cx="3" cy="15.3" r="1.9" fill="#666"/></svg></div><div class="c" style="left:53px">27.04.2025</div><div class="c" style="left:203px">Mangler i IdS ServiceManager</div><div class="c" style="left:453px"><span class="gdot"></span><span class="red">Håvard Meling</span></div><div class="c" style="left:653px">AAD tilganger</div><div class="c" style="left:803px">Entra ID</div><div class="c" style="left:1003px">Bunt-PI3256-BuntMe</div><div class="c" style="left:1183px">Håvard Meling (haavard)</div><div class="c" style="left:1433px">Ja</div><div class="c" style="left:1583px">Brukeren ligger i samme leietaker som tjenesten</div></div><div class="row" style="top:481px;background:#f2f2f2"><div class="rdots"><svg width="6" height="18" viewBox="0 0 6 18"><circle cx="3" cy="2.6" r="1.9" fill="#666"/><circle cx="3" cy="9" r="1.9" fill="#666"/><circle cx="3" cy="15.3" r="1.9" fill="#666"/></svg></div><div class="c" style="left:53px">27.04.2025</div><div class="c" style="left:203px">Mangler i IdS ServiceManager</div><div class="c" style="left:453px"><span class="gdot"></span><span class="red">Håvard Meling</span></div><div class="c" style="left:653px">AAD tilganger</div><div class="c" style="left:803px">Entra ID</div><div class="c" style="left:1003px">Bunt-PI3256-X</div><div class="c" style="left:1183px">Håvard Meling (haavard)</div><div class="c" style="left:1433px">Ja</div><div class="c" style="left:1583px">Brukeren ligger i samme leietaker som tjenesten</div></div>
 </div>
 <div class="header"><div class="hbg"></div>
  <div class="htxt" style="left:61px">Oppdaget</div><div class="hfilt" style="left:148.5px"><svg width="13" height="10" viewBox="0 0 13 10"><rect x="0" y="0.2" width="13" height="1.8" fill="#3a3a3a"/><rect x="3" y="4.2" width="7" height="1.8" fill="#3a3a3a"/><rect x="4.5" y="8.2" width="4" height="1.8" fill="#3a3a3a"/></svg></div><div class="hdots" style="left:175px"><svg width="4" height="14" viewBox="0 0 4 14"><circle cx="2" cy="2.3" r="1.35" fill="#2a2d2f"/><circle cx="2" cy="7" r="1.35" fill="#2a2d2f"/><circle cx="2" cy="11.6" r="1.35" fill="#2a2d2f"/></svg></div><div class="hsep" style="left:194.5px"></div><div class="htxt" style="left:211px">Type</div><div class="hfilt" style="left:398.5px"><svg width="13" height="10" viewBox="0 0 13 10"><rect x="0" y="0.2" width="13" height="1.8" fill="#3a3a3a"/><rect x="3" y="4.2" width="7" height="1.8" fill="#3a3a3a"/><rect x="4.5" y="8.2" width="4" height="1.8" fill="#3a3a3a"/></svg></div><div class="hdots" style="left:425px"><svg width="4" height="14" viewBox="0 0 4 14"><circle cx="2" cy="2.3" r="1.35" fill="#2a2d2f"/><circle cx="2" cy="7" r="1.35" fill="#2a2d2f"/><circle cx="2" cy="11.6" r="1.35" fill="#2a2d2f"/></svg></div><div class="hsep" style="left:444.5px"></div><div class="htxt" style="left:461px">Bruker</div><div class="hfilt" style="left:598.5px"><svg width="13" height="10" viewBox="0 0 13 10"><rect x="0" y="0.2" width="13" height="1.8" fill="#3a3a3a"/><rect x="3" y="4.2" width="7" height="1.8" fill="#3a3a3a"/><rect x="4.5" y="8.2" width="4" height="1.8" fill="#3a3a3a"/></svg></div><div class="hdots" style="left:625px"><svg width="4" height="14" viewBox="0 0 4 14"><circle cx="2" cy="2.3" r="1.35" fill="#2a2d2f"/><circle cx="2" cy="7" r="1.35" fill="#2a2d2f"/><circle cx="2" cy="11.6" r="1.35" fill="#2a2d2f"/></svg></div><div class="hsep" style="left:644.5px"></div><div class="htxt" style="left:661px">Tjeneste</div><div class="hfilt" style="left:748.5px"><svg width="13" height="10" viewBox="0 0 13 10"><rect x="0" y="0.2" width="13" height="1.8" fill="#3a3a3a"/><rect x="3" y="4.2" width="7" height="1.8" fill="#3a3a3a"/><rect x="4.5" y="8.2" width="4" height="1.8" fill="#3a3a3a"/></svg></div><div class="hdots" style="left:775px"><svg width="4" height="14" viewBox="0 0 4 14"><circle cx="2" cy="2.3" r="1.35" fill="#2a2d2f"/><circle cx="2" cy="7" r="1.35" fill="#2a2d2f"/><circle cx="2" cy="11.6" r="1.35" fill="#2a2d2f"/></svg></div><div class="hsep" style="left:794.5px"></div><div class="htxt" style="left:811px">Systemtilkobling</div><div class="hfilt" style="left:948.5px"><svg width="13" height="10" viewBox="0 0 13 10"><rect x="0" y="0.2" width="13" height="1.8" fill="#3a3a3a"/><rect x="3" y="4.2" width="7" height="1.8" fill="#3a3a3a"/><rect x="4.5" y="8.2" width="4" height="1.8" fill="#3a3a3a"/></svg></div><div class="hdots" style="left:975px"><svg width="4" height="14" viewBox="0 0 4 14"><circle cx="2" cy="2.3" r="1.35" fill="#2a2d2f"/><circle cx="2" cy="7" r="1.35" fill="#2a2d2f"/><circle cx="2" cy="11.6" r="1.35" fill="#2a2d2f"/></svg></div><div class="hsep" style="left:994.5px"></div><div class="htxt" style="left:1011px">Tilgangsnivå</div><div class="hfilt" style="left:1128.5px"><svg width="13" height="10" viewBox="0 0 13 10"><rect x="0" y="0.2" width="13" height="1.8" fill="#3a3a3a"/><rect x="3" y="4.2" width="7" height="1.8" fill="#3a3a3a"/><rect x="4.5" y="8.2" width="4" height="1.8" fill="#3a3a3a"/></svg></div><div class="hdots" style="left:1155px"><svg width="4" height="14" viewBox="0 0 4 14"><circle cx="2" cy="2.3" r="1.35" fill="#2a2d2f"/><circle cx="2" cy="7" r="1.35" fill="#2a2d2f"/><circle cx="2" cy="11.6" r="1.35" fill="#2a2d2f"/></svg></div><div class="hsep" style="left:1174.5px"></div><div class="htxt" style="left:1191px">Ekstern systembruker</div><div class="hfilt" style="left:1378.5px"><svg width="13" height="10" viewBox="0 0 13 10"><rect x="0" y="0.2" width="13" height="1.8" fill="#3a3a3a"/><rect x="3" y="4.2" width="7" height="1.8" fill="#3a3a3a"/><rect x="4.5" y="8.2" width="4" height="1.8" fill="#3a3a3a"/></svg></div><div class="hdots" style="left:1405px"><svg width="4" height="14" viewBox="0 0 4 14"><circle cx="2" cy="2.3" r="1.35" fill="#2a2d2f"/><circle cx="2" cy="7" r="1.35" fill="#2a2d2f"/><circle cx="2" cy="11.6" r="1.35" fill="#2a2d2f"/></svg></div><div class="hsep" style="left:1424.5px"></div><div class="htxt" style="left:1441px">Aktiv syste...</div><div class="hfilt" style="left:1528.5px"><svg width="13" height="10" viewBox="0 0 13 10"><rect x="0" y="0.2" width="13" height="1.8" fill="#3a3a3a"/><rect x="3" y="4.2" width="7" height="1.8" fill="#3a3a3a"/><rect x="4.5" y="8.2" width="4" height="1.8" fill="#3a3a3a"/></svg></div><div class="hdots" style="left:1555px"><svg width="4" height="14" viewBox="0 0 4 14"><circle cx="2" cy="2.3" r="1.35" fill="#2a2d2f"/><circle cx="2" cy="7" r="1.35" fill="#2a2d2f"/><circle cx="2" cy="11.6" r="1.35" fill="#2a2d2f"/></svg></div><div class="hsep" style="left:1574.5px"></div><div class="htxt" style="left:1591px">Brukerstatus</div><svg class="sortarrow" style="left:723px;top:485px" width="11" height="12" viewBox="0 0 11 12"><path d="M5.1,1.6 L5.1,11 M0.6,5.7 L5.1,1.2 L9.6,5.7" stroke="#2a2d2f" stroke-width="1.7" fill="none"/></svg>
 </div>
 <div class="focus"></div>
 <div class="pinline"></div>
 <div class="vscroll">
  <svg class="abs" style="left:3px;top:4px" width="9" height="8" viewBox="0 0 9 8"><path d="M0,7.5 L4.5,0 L9,7.5 Z" fill="#888"/></svg>
  <div class="abs" style="left:3px;top:18px;width:9px;height:17px;border-radius:4.5px;background:#888"></div>
  <svg class="abs" style="left:3px;top:478px" width="9" height="8" viewBox="0 0 9 8"><path d="M0,0 L9,0 L4.5,7.5 Z" fill="#888"/></svg>
 </div>
 <div class="hscroll">
  <div class="abs" style="left:0;top:0;width:40px;height:16px;background:#fff"></div>
  <svg class="abs" style="left:45px;top:3px" width="8" height="9" viewBox="0 0 8 9"><path d="M7.5,0 L0,4.5 L7.5,9 Z" fill="#888"/></svg>
  <div class="abs" style="left:59px;top:3px;width:1141px;height:9px;border-radius:4.5px;background:#888"></div>
  <svg class="abs" style="left:1813px;top:3px" width="8" height="9" viewBox="0 0 8 9"><path d="M0,0 L7.5,4.5 L0,9 Z" fill="#888"/></svg>
 </div>
 <div class="sidebar">
  <svg class="abs" style="left:9px;top:20px" width="15" height="15" viewBox="0 0 15 15"><rect x="0.85" y="0.85" width="12.3" height="12.3" rx="2.2" stroke="#3a3d3f" stroke-width="1.7" fill="none"/><path d="M1,5 H13 M5,1 V13" stroke="#3a3d3f" stroke-width="1.7"/></svg>
  <div class="vtext" style="left:24px;top:41px">Kolonner</div>
  <svg class="abs" style="left:9px;top:138px" width="15" height="12" viewBox="0 0 15 12"><path d="M0.6,2 H13.2 M3.3,6 H10.7 M5.2,10 H8.7" stroke="#3a3d3f" stroke-width="1.7"/></svg>
  <div class="vtext" style="left:24px;top:159px">Filtre</div>
 </div>
 <div class="footer"><div class="t">Rader: 30.706</div></div>
</div></div>
</body></html>
